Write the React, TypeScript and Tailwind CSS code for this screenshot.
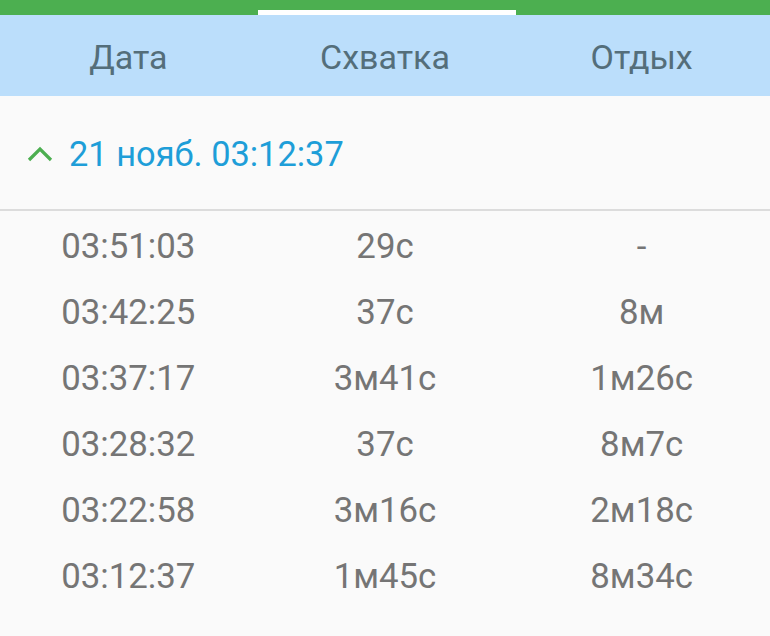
import React from "react";

const rows = [
  ["03:51:03", "29с", "-"],
  ["03:42:25", "37с", "8м"],
  ["03:37:17", "3м41с", "1м26с"],
  ["03:28:32", "37с", "8м7с"],
  ["03:22:58", "3м16с", "2м18с"],
  ["03:12:37", "1м45с", "8м34с"],
];

export default function App() {
  return (
    <div className="w-[770px] h-[636px] bg-[#fafafa] overflow-hidden" style={{ fontFamily: "Roboto, 'Noto Sans', sans-serif" }}>
      <div className="h-[15px] bg-[#4caf50] flex items-end">
        <div className="w-[258px]" />
        <div className="w-[258px] h-[5px] bg-white" />
      </div>
      <div className="h-[81px] bg-[#bbdefb] grid grid-cols-3 items-center text-[34px] text-[#546e7a]">
        <div className="text-center pt-[4px]">Дата</div>
        <div className="text-center pt-[4px]">Схватка</div>
        <div className="text-center pt-[4px]">Отдых</div>
      </div>
      <div className="h-[115px] flex items-center pl-[27px] border-b-2 border-[#dcdcdc]">
        <svg width="26" height="16" viewBox="0 0 26 16" className="mr-[16px] mt-[2px]">
          <path d="M2 14 L13 3 L24 14" fill="none" stroke="#4caf50" strokeWidth="3.2" />
        </svg>
        <span className="text-[34.4px] text-[#1e9ed8] pt-[4px]">21 нояб. 03:12:37</span>
      </div>
      <div className="flex flex-col">
        {rows.map((r, i) => (
          <div key={i} className="h-[66px] grid grid-cols-3 items-center text-[34.8px] text-[#757575]">
            <div className="text-center pt-[4px]">{r[0]}</div>
            <div className="text-center pt-[4px]">{r[1]}</div>
            <div className="text-center pt-[4px]">{r[2]}</div>
          </div>
        ))}
      </div>
    </div>
  );
}
